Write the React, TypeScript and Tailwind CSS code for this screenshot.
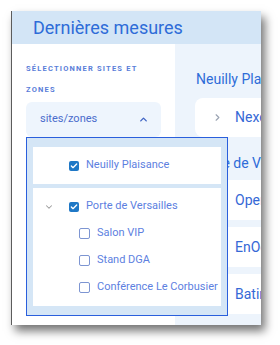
import React from 'react';
import { ChevronUp, ChevronDown, ChevronRight, Check } from 'lucide-react';

const SUB_ZONES = ['Salon VIP', 'Stand DGA', 'Conférence Le Corbusier'];
const DEVICES = ['Operateur', 'EnOcean', 'Batiment'];

function CheckedBox() {
  return (
    <span className="w-[10px] h-[10px] rounded-[2px] bg-[#1f78c6] flex items-center justify-center shrink-0">
      <Check className="w-[8px] h-[8px] text-white" strokeWidth={4} />
    </span>
  );
}

function EmptyBox() {
  return <span className="w-[11px] h-[11px] rounded-[2px] border border-[#7d95d2] bg-white shrink-0" />;
}

export default function App() {
  return (
    <div className="w-[280px] h-[345px] bg-white pt-[11px] pl-[11px]" style={{ fontFamily: 'Roboto, "Noto Sans", sans-serif' }}>
      {/* Window */}
      <div className="w-[250px] h-[314px] border-l border-[#5c5c5c] flex flex-col overflow-hidden shadow-[4px_6px_9px_rgba(0,0,0,0.55)]">
        {/* Header */}
        <div className="h-[33px] shrink-0 bg-[#d3e5f6] flex items-center pl-[21px]">
          <h1 className="text-[18px] leading-none text-[#2e6cd8] whitespace-nowrap">Dernières mesures</h1>
        </div>

        <div className="flex flex-1 min-h-0">
          {/* Left panel */}
          <div className="w-[163px] shrink-0 bg-white pl-[14px] pt-[14px] relative z-10">
            <p className="text-[7.5px] leading-[21px] font-bold tracking-[1.2px] uppercase text-[#5a7ed9] whitespace-nowrap">
              Sélectionner sites et
              <br />
              zones
            </p>
            <div className="relative mt-[2px]">
              <button className="w-[135px] h-[35px] rounded-md bg-[#eef5fd] flex items-center justify-between pl-[14px] pr-[12px]">
                <span className="text-[11px] text-[#4a6ccc]">sites/zones</span>
                <ChevronUp className="w-[11px] h-[11px] text-[#3f64c4]" strokeWidth={3} />
              </button>

              {/* Dropdown */}
              <div className="absolute top-full left-0 w-[202px] h-[179px] border-[1.5px] border-[#2a5fdc] bg-[#d5e6f6] px-[6px] pt-[9px] flex flex-col gap-[4px]">
                <div className="h-[37px] bg-white flex items-center pl-[36px] gap-[7px]">
                  <CheckedBox />
                  <span className="text-[11px] text-[#5d7fdf] whitespace-nowrap">Neuilly Plaisance</span>
                </div>
                <div className="h-[118px] bg-white py-[5px] flex flex-col">
                  <div className="h-[27px] flex items-center pl-[11px]">
                    <span className="w-[25px] flex items-center">
                      <ChevronDown className="w-[10px] h-[10px] text-[#9a9a9a]" strokeWidth={2.5} />
                    </span>
                    <CheckedBox />
                    <span className="ml-[7px] text-[11px] text-[#5d7fdf] whitespace-nowrap">Porte de Versailles</span>
                  </div>
                  {SUB_ZONES.map((zone) => (
                    <div key={zone} className="h-[27px] flex items-center pl-[46px] gap-[7px]">
                      <EmptyBox />
                      <span className="text-[11px] text-[#5d7fdf] whitespace-nowrap">{zone}</span>
                    </div>
                  ))}
                </div>
              </div>
            </div>
          </div>

          {/* Right panel */}
          <div className="flex-1 bg-[#edf4fc] pt-[25px] pl-[20px] overflow-hidden">
            <div className="w-[200px]">
              <h2 className="text-[14px] leading-[20px] pl-[1px] text-[#2e6cd8] whitespace-nowrap">Neuilly Plaisance</h2>
              <div className="mt-[9px] h-[39px] bg-white rounded-lg flex items-center pl-[17px] gap-[12px]">
                <ChevronRight className="w-[11px] h-[11px] text-[#9aa3b2]" strokeWidth={2.5} />
                <span className="text-[14px] text-[#3568d6]">Nexelec</span>
              </div>
              <h2 className="mt-[16px] text-[14px] leading-[20px] pl-[1px] text-[#2e6cd8] whitespace-nowrap">Porte de Versailles</h2>
              <div className="mt-[7px] flex flex-col gap-[7px]">
                {DEVICES.map((d) => (
                  <div key={d} className="h-[40px] bg-white rounded-lg flex items-center pl-[17px] gap-[12px]">
                    <ChevronRight className="w-[11px] h-[11px] text-[#9aa3b2]" strokeWidth={2.5} />
                    <span className="text-[14px] text-[#3568d6]">{d}</span>
                  </div>
                ))}
              </div>
            </div>
          </div>
        </div>
      </div>
    </div>
  );
}
